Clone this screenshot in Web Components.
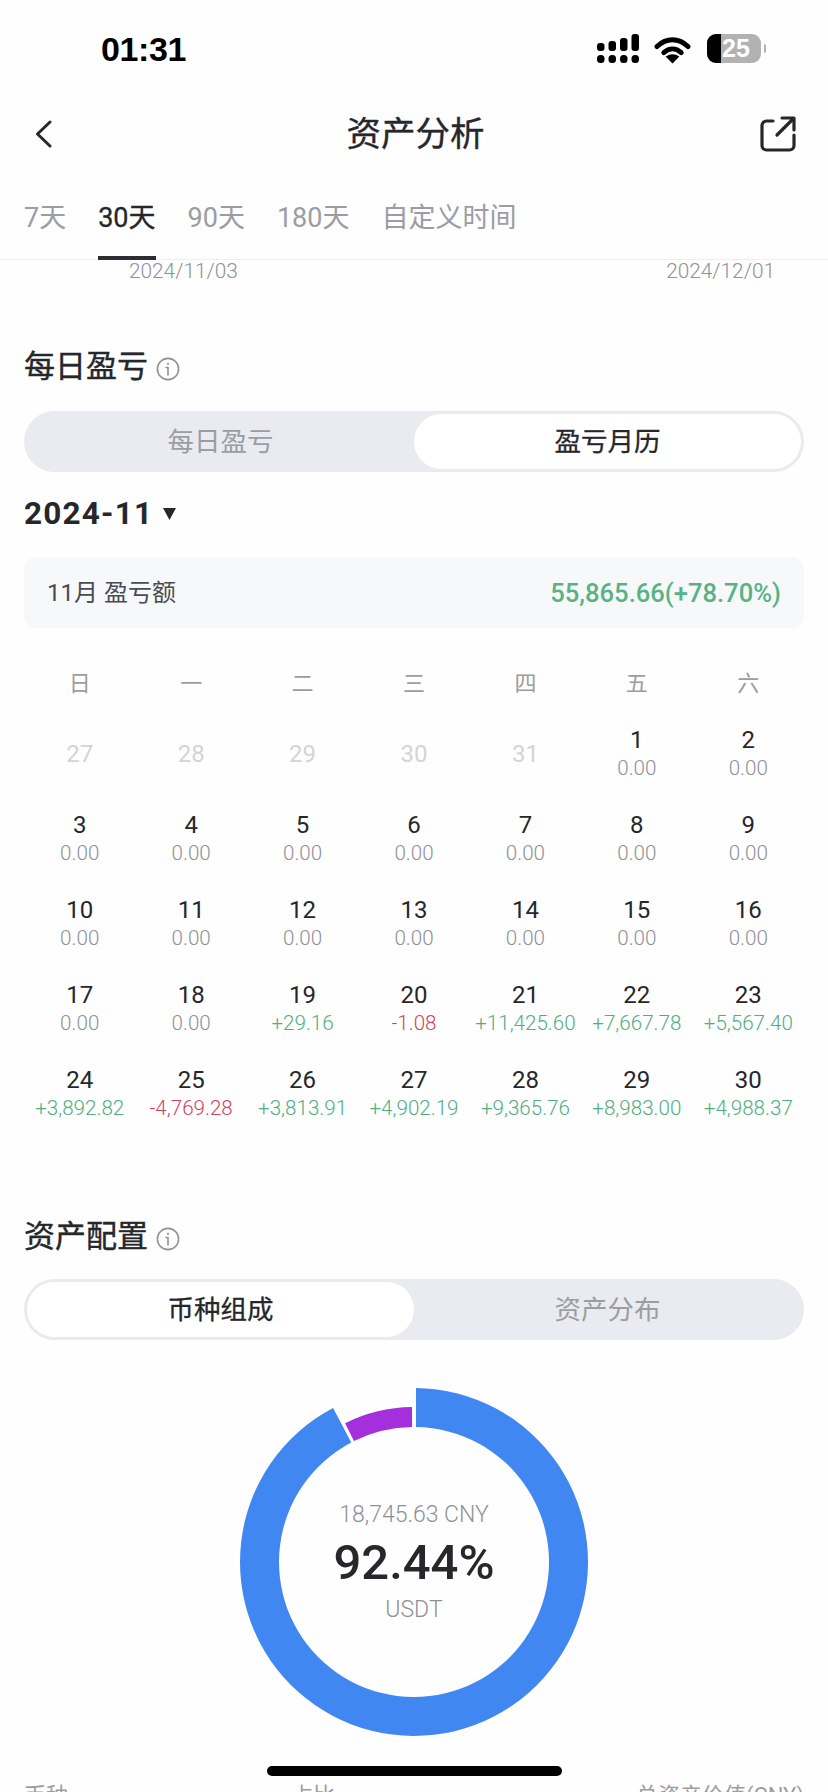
<!DOCTYPE html>
<html lang="zh-CN">
<head>
<meta charset="utf-8">
<title>资产分析</title>
<style>
  html, body { margin: 0; height: 1792px; overflow: hidden; background: #fefefe; }
  body { font-family: Roboto, "Noto Sans CJK SC", sans-serif; color: #25272b; }
</style>
</head>
<body>
<asset-page></asset-page>

<script>
// status-bar
class StatusBar extends HTMLElement {
  constructor() {
    super();
    this.attachShadow({ mode: 'open' });
    this.shadowRoot.innerHTML = `
      <style>
        :host { display: flex; height: 88px; box-sizing: border-box; padding: 0 62px 0 101px; justify-content: space-between; align-items: flex-start; color: #000; }
        .time { margin-top: 30px; font: 700 34px/38px "Liberation Sans", sans-serif; letter-spacing: -.4px; }
        .icons { display: flex; margin-top: 34px; gap: 15px; align-items: flex-start; }
        svg { display: block; }
        .bat { position: relative; width: 54px; height: 29px; border-radius: 9px; overflow: hidden; background: #b2b2b2; }
        .bat i { display: block; width: 14px; height: 100%; background: #000; }
        .bat span { position: absolute; left: 11px; top: 0; width: 36px; text-align: center; font: 700 25px/29px "Liberation Sans", sans-serif; color: #fff; }
        .wrap { display: flex; align-items: center; gap: 3px; margin-left: 1px; }
        .nub { width: 2px; height: 9px; background: #b2b2b2; border-radius: 0 2px 2px 0; }
      </style>
      <div class="time">01:31</div>
      <div class="icons">
        <svg width="42" height="30" viewBox="0 0 42 30" fill="#000">
          <rect x="0" y="9" width="7.5" height="8" rx="3"/><rect x="11.5" y="7" width="7.5" height="10" rx="3"/>
          <rect x="23" y="4" width="7.5" height="13" rx="3"/><rect x="34.5" y="0" width="7.5" height="17" rx="3"/>
          <rect x="0" y="21" width="7.5" height="8" rx="3.5"/><rect x="11.5" y="21" width="7.5" height="8" rx="3.5"/>
          <rect x="23" y="21" width="7.5" height="8" rx="3.5"/><rect x="34.5" y="21" width="7.5" height="8" rx="3.5"/>
        </svg>
        <svg width="37" height="28" viewBox="0 0 37 28" style="margin-top:2px">
          <path d="M3 10.5C12.5 1.5 24.5 1.5 34 10.5" fill="none" stroke="#000" stroke-width="5" stroke-linecap="round"/>
          <path d="M9.8 16.6C15.2 11.8 21.8 11.8 27.2 16.6" fill="none" stroke="#000" stroke-width="5" stroke-linecap="round"/>
          <path d="M18.5 27.5L11.6 20.6C15.6 17.3 21.4 17.3 25.4 20.6Z" fill="#000"/>
        </svg>
        <div class="wrap">
          <div class="bat"><i></i><span>25</span></div>
          <div class="nub"></div>
        </div>
      </div>
    `;
  }
}
customElements.define('status-bar', StatusBar);

// nav-bar
class NavBar extends HTMLElement {
  constructor() {
    super();
    this.attachShadow({ mode: 'open' });
    this.shadowRoot.innerHTML = `
      <style>
        :host { display: grid; grid-template-columns: 1fr auto 1fr; height: 90px; box-sizing: border-box; padding: 2px 32px 0 35px; align-items: center; }
        .title { font-size: 34.5px; line-height: 44px; -webkit-text-stroke: .35px #25272b; }
        svg { display: block; }
        .share { justify-self: end; }
      </style>
      <svg width="17" height="28" viewBox="0 0 17 28" fill="none" stroke="#25272b" stroke-width="3" stroke-linecap="round" stroke-linejoin="round">
        <path d="M15 2L2.5 14L15 26"/>
      </svg>
      <div class="title"><slot></slot></div>
      <svg class="share" width="36" height="36" viewBox="0 0 36 36" fill="none" stroke="#25272b" stroke-width="3.2" stroke-linecap="round" stroke-linejoin="round">
        <path d="M13 5H6.5A4.5 4.5 0 0 0 2 9.5V29.5A4.5 4.5 0 0 0 6.5 34H29.5A4.5 4.5 0 0 0 34 29.5V19"/>
        <path d="M17 19L33.5 2.5M22 2H34V14"/>
      </svg>
    `;
  }
}
customElements.define('nav-bar', NavBar);

// range-tabs
class RangeTabs extends HTMLElement {
  constructor() {
    super();
    const items = ['7天', '30天', '90天', '180天', '自定义时间'];
    this.attachShadow({ mode: 'open' });
    this.shadowRoot.innerHTML = `
      <style>
        :host { display: flex; height: 82px; box-sizing: border-box; padding-left: 24px; gap: 32px; border-bottom: 1px solid #efeff1; }
        .tab { height: 82px; box-sizing: border-box; padding-top: 21px; font-size: 27px; line-height: 38px; color: #9a9da3; }
        .on { color: #25272b; -webkit-text-stroke: .3px #25272b; border-bottom: 4px solid #2b2d33; }
      </style>
      ${items.map((t, i) => `<div class="tab ${i === 1 ? 'on' : ''}">${t}</div>`).join('')}
    `;
  }
}
customElements.define('range-tabs', RangeTabs);

// date-range
class DateRange extends HTMLElement {
  constructor() {
    super();
    this.attachShadow({ mode: 'open' });
    this.shadowRoot.innerHTML = `
      <style>
        :host { display: flex; justify-content: space-between; height: 20px; padding: 0 53px 0 129px; font-size: 20.8px; font-weight: 300; line-height: 22px; color: #8e9196; }
      </style>
      <div>${this.getAttribute('from')}</div>
      <div>${this.getAttribute('to')}</div>
    `;
  }
}
customElements.define('date-range', DateRange);

// section-title
class SectionTitle extends HTMLElement {
  constructor() {
    super();
    this.attachShadow({ mode: 'open' });
    this.shadowRoot.innerHTML = `
      <style>
        :host { display: flex; align-items: center; gap: 8px; height: 44px; font-size: 31px; line-height: 44px; -webkit-text-stroke: .4px #25272b; }
        svg { display: block; margin-top: 3px; }
      </style>
      <slot></slot>
      <svg width="24" height="24" viewBox="0 0 24 24" fill="none" stroke="#8e9196" stroke-width="1.6">
        <circle cx="12" cy="12" r="10.6"/>
        <path d="M12 10.5V18M10 10.5H12" stroke-linecap="round"/>
        <circle cx="12" cy="6.8" r="1.1" fill="#8e9196" stroke="none"/>
      </svg>
    `;
  }
}
customElements.define('section-title', SectionTitle);

// seg-switch
class SegSwitch extends HTMLElement {
  constructor() {
    super();
    const active = Number(this.getAttribute('active'));
    const labels = this.getAttribute('labels').split(',');
    this.attachShadow({ mode: 'open' });
    this.shadowRoot.innerHTML = `
      <style>
        :host { display: grid; grid-template-columns: 1fr 1fr; height: 61px; box-sizing: border-box; padding: 3px; background: #e9ebf0; border-radius: 31px; }
        .seg { display: flex; align-items: center; justify-content: center; border-radius: 28px; font-size: 26.5px; line-height: 38px; color: #9a9da3; }
        .on { background: #fff; color: #25272b; -webkit-text-stroke: .3px #25272b; }
      </style>
      ${labels.map((t, i) => `<div class="seg ${i === active ? 'on' : ''}">${t}</div>`).join('')}
    `;
  }
}
customElements.define('seg-switch', SegSwitch);

// month-picker
class MonthPicker extends HTMLElement {
  constructor() {
    super();
    this.attachShadow({ mode: 'open' });
    this.shadowRoot.innerHTML = `
      <style>
        :host { display: flex; align-items: center; gap: 10px; height: 40px; font-size: 31.5px; font-weight: 700; line-height: 40px; letter-spacing: 1.2px; }
        svg { display: block; }
      </style>
      <slot></slot>
      <svg width="13" height="12" viewBox="0 0 13 12"><path d="M0 0H13L6.5 12Z" fill="#25272b"/></svg>
    `;
  }
}
customElements.define('month-picker', MonthPicker);

// month-summary
class MonthSummary extends HTMLElement {
  constructor() {
    super();
    this.attachShadow({ mode: 'open' });
    this.shadowRoot.innerHTML = `
      <style>
        :host { display: flex; align-items: center; justify-content: space-between; height: 71px; box-sizing: border-box; padding: 0 23px; background: #f7f8fa; border-radius: 12px; font-size: 24px; line-height: 30px; color: #4a4c52; }
        .val { font-size: 25.6px; font-weight: 500; color: #57b384; }
      </style>
      <div>${this.getAttribute('label')}</div>
      <div class="val">${this.getAttribute('value')}</div>
    `;
  }
}
customElements.define('month-summary', MonthSummary);

// pnl-calendar
class PnlCalendar extends HTMLElement {
  constructor() {
    super();
    const week = ['日', '一', '二', '三', '四', '五', '六'];
    const prev = [27, 28, 29, 30, 31];
    const vals = {
      19: '+29.16', 20: '-1.08', 21: '+11,425.60', 22: '+7,667.78', 23: '+5,567.40',
      24: '+3,892.82', 25: '-4,769.28', 26: '+3,813.91', 27: '+4,902.19',
      28: '+9,365.76', 29: '+8,983.00', 30: '+4,988.37'
    };
    let cells = prev.map(d => `<div class="cell"><div class="num old">${d}</div></div>`).join('');
    for (let d = 1; d <= 30; d++) {
      const v = vals[d] || '0.00';
      const cls = v[0] === '+' ? 'up' : v[0] === '-' ? 'down' : '';
      cells += `<div class="cell"><div class="num">${d}</div><div class="val ${cls}">${v}</div></div>`;
    }
    this.attachShadow({ mode: 'open' });
    this.shadowRoot.innerHTML = `
      <style>
        :host { display: block; }
        .week, .days { display: grid; grid-template-columns: repeat(7, 1fr); }
        .week { height: 46px; box-sizing: border-box; padding-top: 4px; margin-bottom: 5px; align-items: center; text-align: center; font-size: 22px; line-height: 30px; color: #9a9da3; }
        .days { grid-auto-rows: 85px; }
        .cell { display: flex; flex-direction: column; align-items: center; justify-content: center; padding-top: 1px; white-space: nowrap; }
        .num { font-size: 24px; line-height: 29px; }
        .old { color: #d3d4d7; margin-top: 2px; }
        .val { font-size: 20.6px; font-weight: 300; line-height: 26px; color: #8e9196; }
        .up { color: #4fae7f; }
        .down { color: #d4425f; }
      </style>
      <div class="week">${week.map(w => `<div>${w}</div>`).join('')}</div>
      <div class="days">${cells}</div>
    `;
  }
}
customElements.define('pnl-calendar', PnlCalendar);

// donut-chart
class DonutChart extends HTMLElement {
  constructor() {
    super();
    this.attachShadow({ mode: 'open' });
    this.shadowRoot.innerHTML = `
      <style>
        :host { display: grid; justify-content: center; }
        svg, .center { grid-area: 1 / 1; }
        svg { display: block; }
        .center { display: flex; flex-direction: column; align-items: center; justify-content: center; text-align: center; }
        .cny { font-size: 23px; font-weight: 300; line-height: 30px; color: #8e9196; }
        .pct { font-size: 49px; font-weight: 500; line-height: 62px; margin: 2px 0 1px; }
        .coin { font-size: 23px; font-weight: 300; line-height: 30px; color: #8e9196; }
      </style>
      <svg width="348" height="348" viewBox="0 0 348 348">
        <path d="${this._ring(174, 135, 0.66, 332.3, 0.85, 332.3)}" fill="#4187f2"/>
        <path d="${this._ring(155, 135, 333.6, 359.26, 333.6, 359.15)}" fill="#a32fdd"/>
      </svg>
      <div class="center">
        <div class="cny">${this.getAttribute('amount')}</div>
        <div class="pct">${this.getAttribute('percent')}</div>
        <div class="coin">${this.getAttribute('coin')}</div>
      </div>
    `;
  }

  // clockwise ring slice, angles in degrees from 12 o'clock
  _ring(ro, ri, a0, a1, b0, b1) {
    const pt = (r, a) => {
      const t = a * Math.PI / 180;
      return (174 + r * Math.sin(t)).toFixed(2) + ' ' + (174 - r * Math.cos(t)).toFixed(2);
    };
    const large = a1 - a0 > 180 ? 1 : 0;
    return `M${pt(ro, a0)}A${ro} ${ro} 0 ${large} 1 ${pt(ro, a1)}L${pt(ri, b1)}A${ri} ${ri} 0 ${large} 0 ${pt(ri, b0)}Z`;
  }
}
customElements.define('donut-chart', DonutChart);

// asset-table-head
class AssetTableHead extends HTMLElement {
  constructor() {
    super();
    this.attachShadow({ mode: 'open' });
    this.shadowRoot.innerHTML = `
      <style>
        :host { display: grid; grid-template-columns: 1fr 1fr 1fr; height: 30px; font-size: 22px; line-height: 30px; color: #9a9da3; }
        div:nth-of-type(2) { padding-left: 7px; }
        div:nth-of-type(3) { text-align: right; white-space: nowrap; }
      </style>
      <div>币种</div><div>占比</div><div>总资产价值(CNY)</div>
    `;
  }
}
customElements.define('asset-table-head', AssetTableHead);

// home-indicator
class HomeIndicator extends HTMLElement {
  constructor() {
    super();
    this.attachShadow({ mode: 'open' });
    this.shadowRoot.innerHTML = `
      <style>
        :host { position: absolute; left: 267px; top: 1766px; width: 295px; height: 10px; border-radius: 5px; background: #000; }
      </style>
    `;
  }
}
customElements.define('home-indicator', HomeIndicator);

// asset-page
class AssetPage extends HTMLElement {
  constructor() {
    super();
    this.attachShadow({ mode: 'open' });
    this.shadowRoot.innerHTML = `
      <style>
        :host { display: block; position: relative; width: 828px; height: 1792px; overflow: hidden; }
        .body { padding: 0 24px; }
        .t1 { margin-top: 65px; }
        .s1 { margin-top: 22px; }
        .m { margin-top: 22px; }
        .sum { margin-top: 23px; }
        .cal { margin-top: 31px; }
        .t2 { margin-top: 80px; }
        .s2 { margin-top: 20px; }
        .don { margin-top: 48px; }
        .head { margin-top: 45px; }
      </style>
      <status-bar></status-bar>
      <nav-bar>资产分析</nav-bar>
      <range-tabs></range-tabs>
      <date-range from="2024/11/03" to="2024/12/01"></date-range>
      <div class="body">
        <section-title class="t1">每日盈亏</section-title>
        <seg-switch class="s1" labels="每日盈亏,盈亏月历" active="1"></seg-switch>
        <month-picker class="m">2024-11</month-picker>
        <month-summary class="sum" label="11月 盈亏额" value="55,865.66(+78.70%)"></month-summary>
        <pnl-calendar class="cal"></pnl-calendar>
        <section-title class="t2">资产配置</section-title>
        <seg-switch class="s2" labels="币种组成,资产分布" active="0"></seg-switch>
        <donut-chart class="don" amount="18,745.63 CNY" percent="92.44%" coin="USDT"></donut-chart>
        <asset-table-head class="head"></asset-table-head>
      </div>
      <home-indicator></home-indicator>
    `;
  }
}
customElements.define('asset-page', AssetPage);
</script>
</body>
</html>
